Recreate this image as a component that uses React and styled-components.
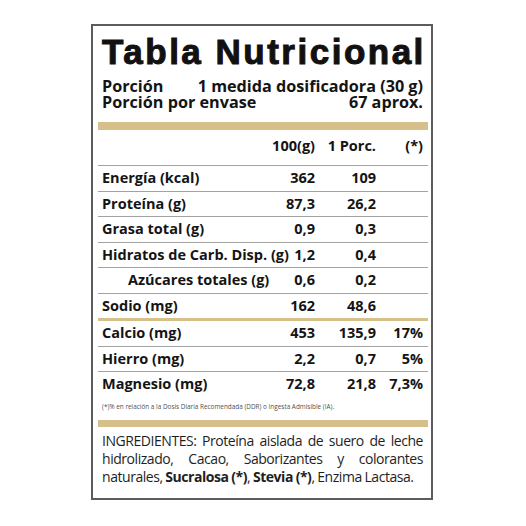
import React from 'react'
import styled, { createGlobalStyle } from 'styled-components'

const GlobalStyle = createGlobalStyle`
  body {
    margin: 0;
    background: #ffffff;
  }
`

const GOLD = '#d5bf8b'
const RULE = '#a3a3a3'

const Page = styled.div`
  padding: 24px 0 0 91px;
`

const Label = styled.div`
  box-sizing: border-box;
  width: 342px;
  height: 476px;
  border: 2px solid #5c5c5c;
  padding: 0 3px 0 5px;
  color: #141414;
  font-family: "Open Sans", "Noto Sans", sans-serif;
`

const Title = styled.h1`
  margin: 0;
  padding: 6px 0 0 4px;
  font-family: "Liberation Sans", Arial, sans-serif;
  font-weight: 700;
  font-size: 35px;
  line-height: 40px;
  letter-spacing: 2.5px;
  -webkit-text-stroke: 1px #111;
  color: #111;
  white-space: nowrap;
`

const ServingRow = styled.div`
  display: flex;
  justify-content: space-between;
  padding: 0 5px 0 4px;
  margin-top: ${p => p.$top || 0}px;
  font-weight: 700;
  font-size: 16.2px;
  line-height: 16px;
  white-space: nowrap;
`

const GoldBar = styled.div`
  height: ${p => p.$h || 8}px;
  margin-top: ${p => p.$top || 0}px;
  background: ${GOLD};
`

const Row = styled.div`
  display: grid;
  grid-template-columns: minmax(0, 1fr) 50px 61px 47px;
  padding: ${p => (p.$head ? '4px 5px 6.5px 4px' : '0 5px 0 4px')};
  border-bottom: ${p => (p.$last ? 'none' : p.$gold ? `3px solid ${GOLD}` : `1px solid ${RULE}`)};
  font-weight: 700;
  font-size: 14.5px;
  line-height: 24.5px;
  white-space: nowrap;
`

const Name = styled.span`
  padding-left: ${p => (p.$indent ? 26 : 0)}px;
`

const Num = styled.span`
  text-align: right;
`

const Footnote = styled.div`
  margin-top: 5px;
  padding: 0 5px 0 4px;
  font-size: 6.4px;
  line-height: 10px;
  color: #505050;
  white-space: nowrap;
`

const Ingredients = styled.p`
  margin: 5px 0 0;
  padding: 0 5px 0 4px;
  font-size: 14px;
  line-height: 18px;
  letter-spacing: -0.45px;
  word-spacing: -0.5px;
  text-align: justify;
  color: #1e1e1e;
`

const rows = [
  { name: 'Energía (kcal)', a: '362', b: '109', c: '' },
  { name: 'Proteína (g)', a: '87,3', b: '26,2', c: '' },
  { name: 'Grasa total (g)', a: '0,9', b: '0,3', c: '' },
  { name: 'Hidratos de Carb. Disp. (g)', a: '1,2', b: '0,4', c: '' },
  { name: 'Azúcares totales (g)', a: '0,6', b: '0,2', c: '', indent: true },
  { name: 'Sodio (mg)', a: '162', b: '48,6', c: '', gold: true },
  { name: 'Calcio (mg)', a: '453', b: '135,9', c: '17%' },
  { name: 'Hierro (mg)', a: '2,2', b: '0,7', c: '5%' },
  { name: 'Magnesio (mg)', a: '72,8', b: '21,8', c: '7,3%', last: true },
]

export default function App() {
  return (
    <Page>
      <GlobalStyle />
      <Label>
        <Title>Tabla Nutricional</Title>
        <ServingRow $top={6}>
          <span>Porción</span>
          <span>1 medida dosificadora (30 g)</span>
        </ServingRow>
        <ServingRow>
          <span>Porción por envase</span>
          <span>67 aprox.</span>
        </ServingRow>
        <GoldBar $top={12} />
        <Row $head>
          <span />
          <Num>100(g)</Num>
          <Num>1 Porc.</Num>
          <Num>(*)</Num>
        </Row>
        {rows.map(r => (
          <Row key={r.name} $gold={r.gold} $last={r.last}>
            <Name $indent={r.indent}>{r.name}</Name>
            <Num>{r.a}</Num>
            <Num>{r.b}</Num>
            <Num>{r.c}</Num>
          </Row>
        ))}
        <Footnote>
          (*)% en relación a la Dosis Diaria Recomendada (DDR) o Ingesta Admisible (IA).
        </Footnote>
        <GoldBar $h={7} $top={8} />
        <Ingredients>
          INGREDIENTES: Proteína aislada de suero de leche hidrolizado, Cacao, Saborizantes y
          colorantes naturales, <b>Sucralosa (*)</b>, <b>Stevia (*)</b>, Enzima Lactasa.
        </Ingredients>
      </Label>
    </Page>
  )
}
